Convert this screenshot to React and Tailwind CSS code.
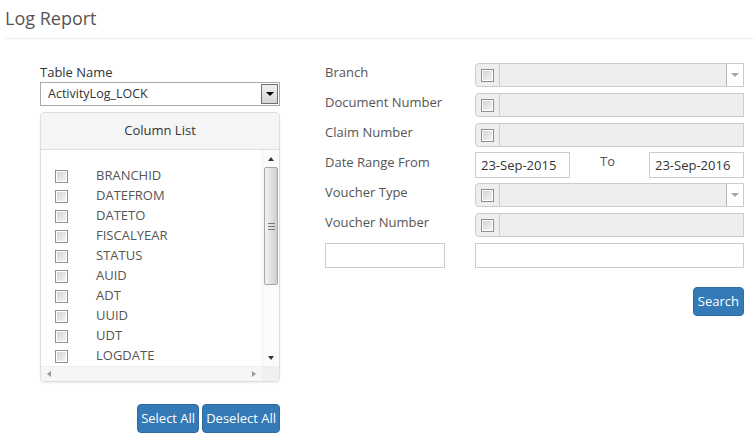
const columns = [
  "BRANCHID",
  "DATEFROM",
  "DATETO",
  "FISCALYEAR",
  "STATUS",
  "AUID",
  "ADT",
  "UUID",
  "UDT",
  "LOGDATE",
];

function Box() {
  return (
    <span className="block w-[13px] h-[13px] border border-[#8f8f8f] bg-white p-[1px]">
      <span className="block w-full h-full bg-gradient-to-br from-[#d4d4d4] to-[#f4f4f4]" />
    </span>
  );
}

function AddonRow({ select }) {
  return (
    <div className="flex h-[24px] w-full">
      <div className="w-[25px] h-full flex items-center justify-center bg-[#eeeeee] border border-[#cccccc] rounded-l-[4px]">
        <Box />
      </div>
      <div className="flex-1 h-full bg-[#eeeeee] border border-l-0 border-[#cccccc] flex justify-end">
        {select && (
          <div className="w-[17px] h-full bg-white border-l border-[#b5b5b5] flex items-center justify-center">
            <span className="w-0 h-0 border-l-[4px] border-r-[4px] border-t-[4px] border-l-transparent border-r-transparent border-t-[#a8a8a8]" />
          </div>
        )}
      </div>
    </div>
  );
}

function Arrow({ dir }) {
  const cls = {
    up: "border-l-[3px] border-r-[3px] border-b-[4px] border-l-transparent border-r-transparent border-b-[#333]",
    down: "border-l-[3px] border-r-[3px] border-t-[4px] border-l-transparent border-r-transparent border-t-[#333]",
    left: "border-t-[3px] border-b-[3px] border-r-[4px] border-t-transparent border-b-transparent border-r-[#999]",
    right: "border-t-[3px] border-b-[3px] border-l-[4px] border-t-transparent border-b-transparent border-l-[#999]",
  };
  return <span className={`w-0 h-0 ${cls[dir]}`} />;
}

export default function App() {
  return (
    <div className="w-[754px] h-[439px] bg-white text-[13px] text-[#555] overflow-hidden" style={{ fontFamily: "'Open Sans', sans-serif" }}>
      <div className="ml-[5px] h-[39px] border-b border-[#eeeeee] flex items-center">
        <h1 className="text-[18px] text-[#555] leading-none -mt-[3px]">Log Report</h1>
      </div>

      <div className="flex pl-[40px] pr-[10px]">
        {/* Left column */}
        <div className="w-[240px] mt-[25px]">
          <div className="h-[19px] leading-[18px] text-[#333] -mt-[1px]">Table Name</div>
          <div className="h-[24px] border border-[#a9a9a9] flex items-center pl-[7px] pr-[1px] text-[#333]">
            <span className="flex-1 text-[12.5px]">ActivityLog_LOCK</span>
            <span className="w-[17px] h-[20px] border border-[#707070] bg-gradient-to-b from-[#f0f0f0] to-[#d6d6d6] flex items-center justify-center">
              <span className="w-0 h-0 border-l-[4px] border-r-[4px] border-t-[4px] border-l-transparent border-r-transparent border-t-black" />
            </span>
          </div>

          <div className="mt-[6px] h-[270px] border border-[#dddddd] rounded-[4px] shadow-[0_1px_2px_rgba(0,0,0,0.08)] flex flex-col overflow-hidden">
            <div className="h-[40px] bg-[#f5f5f5] border-b border-[#dddddd] flex items-center justify-center text-[#333]">
              Column List
            </div>
            <div className="flex-1 flex">
              <div className="flex-1 pt-[16px] pl-[14px]">
                {columns.map((c) => (
                  <div key={c} className="h-[20px] flex items-center">
                    <Box />
                    <span className="ml-[28px]">{c}</span>
                  </div>
                ))}
              </div>
              <div className="w-[17px] flex flex-col border-l border-[#f0f0f0] bg-[#fbfbfb]">
                <div className="h-[17px] flex items-center justify-center">
                  <Arrow dir="up" />
                </div>
                <div className="h-[118px] mx-[1px] border border-[#a7a7a7] rounded-[2px] bg-gradient-to-r from-[#f3f3f3] via-[#e2e2e2] to-[#cfcfcf] flex items-center justify-center">
                  <span className="flex flex-col gap-[2px]">
                    <span className="block w-[7px] h-px bg-[#777]" />
                    <span className="block w-[7px] h-px bg-[#777]" />
                    <span className="block w-[7px] h-px bg-[#777]" />
                  </span>
                </div>
                <div className="flex-1" />
                <div className="h-[17px] flex items-center justify-center">
                  <Arrow dir="down" />
                </div>
              </div>
            </div>
            <div className="h-[16px] flex border-t border-[#eeeeee] bg-[#f6f6f6]">
              <div className="flex-1 flex items-center justify-between px-[6px]">
                <Arrow dir="left" />
                <Arrow dir="right" />
              </div>
              <div className="w-[17px] bg-[#f0f0f0]" />
            </div>
          </div>

          <div className="mt-[22px] flex justify-end gap-[3px]">
            <button className="h-[29px] px-[3px] bg-[#337ab7] border border-[#2e6da4] rounded-[4px] text-white text-[13px]">
              Select All
            </button>
            <button className="h-[29px] px-[3px] bg-[#337ab7] border border-[#2e6da4] rounded-[4px] text-white text-[13px]">
              Deselect All
            </button>
          </div>
        </div>

        {/* Right column */}
        <div className="ml-[45px] flex-1 mt-[24px] flex flex-col">
          <div className="flex gap-0">
            <div className="w-[150px] flex flex-col gap-[12px] leading-[18px]">
              <span>Branch</span>
              <span>Document Number</span>
              <span>Claim Number</span>
              <span>Date Range From</span>
              <span>Voucher Type</span>
              <span>Voucher Number</span>
            </div>
            <div className="flex-1 flex flex-col">
              <AddonRow select />
              <div className="mt-[6px]"><AddonRow /></div>
              <div className="mt-[6px]"><AddonRow /></div>
              <div className="mt-[5px] h-[26px] flex items-center">
                <div className="w-[95px] h-full border border-[#cccccc] flex items-end pb-[2px] pl-[5px] text-[#333]">23-Sep-2015</div>
                <span className="ml-[30px] -mt-[6px] w-[49px]">To</span>
                <div className="w-[95px] h-full border border-[#cccccc] flex items-end pb-[2px] pl-[5px] text-[#333]">23-Sep-2016</div>
              </div>
              <div className="mt-[5px]"><AddonRow select /></div>
              <div className="mt-[6px]"><AddonRow /></div>
            </div>
          </div>
          <div className="mt-[6px] flex">
            <div className="w-[120px] h-[25px] border border-[#cccccc]" />
            <div className="ml-[30px] flex-1 h-[25px] border border-[#cccccc]" />
          </div>
          <div className="mt-[19px] flex justify-end">
            <button className="h-[29px] px-[4px] bg-[#337ab7] border border-[#2e6da4] rounded-[4px] text-white text-[13px]">
              Search
            </button>
          </div>
        </div>
      </div>
    </div>
  );
}
